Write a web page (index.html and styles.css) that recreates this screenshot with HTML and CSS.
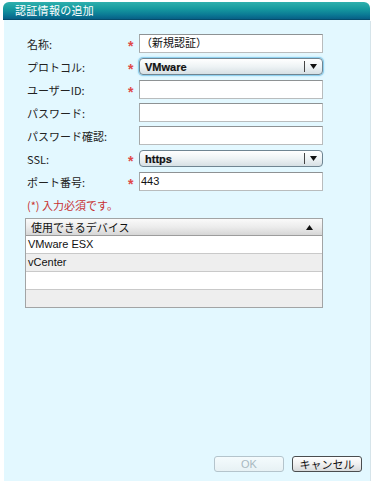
FILE: index.html
```html
<!DOCTYPE html>
<html lang="ja">
<head>
<meta charset="utf-8">
<title>認証情報の追加</title>
<link rel="stylesheet" href="styles.css">
</head>
<body>
<div class="window">
  <div class="titlebar">認証情報の追加</div>
  <div class="panel">
    <div class="form">
      <div class="label">名称:</div><div class="req">*</div><div class="input">（新規認証）</div>
      <div class="label">プロトコル:</div><div class="req">*</div>
      <div class="select focus"><span class="sel-text">VMware</span><span class="sep"></span><svg class="arrow" width="7" height="5" viewBox="0 0 7 5"><path d="M0 0H7L3.5 5Z" fill="#111"/></svg></div>
      <div class="label">ユーザーID:</div><div class="req">*</div><div class="input"></div>
      <div class="label">パスワード:</div><div class="req"></div><div class="input"></div>
      <div class="label">パスワード確認:</div><div class="req"></div><div class="input"></div>
      <div class="label">SSL:</div><div class="req">*</div>
      <div class="select"><span class="sel-text">https</span><span class="sep"></span><svg class="arrow" width="7" height="5" viewBox="0 0 7 5"><path d="M0 0H7L3.5 5Z" fill="#111"/></svg></div>
      <div class="label">ポート番号:</div><div class="req">*</div><div class="input">443</div>
    </div>
    <div class="note">(*) 入力必須です。</div>
    <div class="table">
      <div class="thead"><span>使用できるデバイス</span><svg width="7" height="5" viewBox="0 0 7 5"><path d="M0 5H7L3.5 0Z" fill="#111"/></svg></div>
      <div class="row">VMware ESX</div>
      <div class="row alt">vCenter</div>
      <div class="row"></div>
      <div class="row alt"></div>
    </div>
    <div class="spacer"></div>
    <div class="buttons">
      <div class="btn disabled">OK</div>
      <div class="btn">キャンセル</div>
    </div>
  </div>
</div>
</body>
</html>
```
FILE: styles.css
```css
html, body {
  margin: 0;
  padding: 0;
  background: #ffffff;
}
body {
  font-family: "Liberation Sans", "Noto Sans CJK JP", sans-serif;
  font-size: 11px;
  color: #111;
}
.window {
  margin: 2px 0 0 3px;
  width: 367px;
  display: flex;
  flex-direction: column;
}
.titlebar {
  height: 18px;
  border-radius: 6px 6px 0 0;
  background: linear-gradient(#2fb0ad 0%, #169a9f 40%, #0b7a95 75%, #075f86 100%);
  border-bottom: 1px solid #064c6c;
  color: #fff;
  font-family: "Noto Sans CJK JP", sans-serif;
  font-size: 11px;
  line-height: 17px;
  padding-left: 12px;
  box-sizing: border-box;
  letter-spacing: 0.3px;
}
.panel {
  margin-left: 1px;
  height: 461px;
  background: #e3f8ff;
  display: flex;
  flex-direction: column;
  padding: 14px 0 9px 21px;
  box-sizing: border-box;
  box-shadow: 1px 1px 0 #d6e4ea;
}
.form {
  display: grid;
  grid-template-columns: 105px 9px 184px;
  grid-auto-rows: 19px;
  row-gap: 4px;
  align-items: center;
}
.label {
  padding-left: 2px;
  font-family: "Noto Sans CJK JP", sans-serif;
  font-size: 11px;
  color: #222;
}
.req {
  color: #e04848;
  font-size: 14px;
  font-weight: bold;
  line-height: 19px;
  padding-top: 3px;
  margin-left: -2px;
  height: 19px;
  box-sizing: border-box;
}
.input {
  height: 19px;
  box-sizing: border-box;
  background: #fff;
  border: 1px solid #b9bcbd;
  border-top-color: #8e9294;
  border-left-color: #a6a9aa;
  padding-left: 1px;
  line-height: 17px;
  font-family: "Liberation Sans", "Noto Sans CJK JP", sans-serif;
  font-size: 11px;
}
.select {
  height: 17px;
  box-sizing: border-box;
  border: 1px solid #6f8592;
  border-radius: 4px;
  background: linear-gradient(#ffffff 0%, #eef3f5 50%, #d6e0e4 100%);
  display: flex;
  align-items: center;
  padding-left: 5px;
  font-size: 11px;
}
.select.focus {
  box-shadow: 0 0 0 1px #8fd0ef, 0 0 2px 1px #a9dcf3;
}
.sel-text {
  flex: 1;
  font-weight: 600;
  -webkit-text-stroke: 0.2px #111;
}
.sep {
  width: 1px;
  height: 11px;
  background: #444;
  margin-right: 5px;
}
.arrow {
  margin-right: 5px;
}
.note {
  margin-top: 8px;
  padding-left: 2px;
  color: #c83232;
  font-family: "Noto Sans CJK JP", sans-serif;
  font-size: 11px;
  line-height: 12px;
}
.table {
  margin-top: 7px;
  width: 298px;
  box-sizing: border-box;
  border: 1px solid #a2a4a5;
  display: flex;
  flex-direction: column;
}
.thead {
  height: 16px;
  background: linear-gradient(#fafafa 0%, #ececec 50%, #d6d6d6 100%);
  border-bottom: 1px solid #9c9c9c;
  display: flex;
  align-items: center;
  justify-content: space-between;
  padding: 0 9px 0 5px;
  font-family: "Noto Sans CJK JP", sans-serif;
  font-size: 11px;
}
.row {
  height: 18px;
  box-sizing: border-box;
  border-bottom: 1px solid #c9c9c9;
  background: #fff;
  padding-left: 2px;
  line-height: 17px;
  font-size: 11px;
}
.row:last-child {
  border-bottom: none;
  height: 17px;
}
.row.alt {
  background: #eeeeee;
}
.spacer {
  flex: 1;
}
.buttons {
  display: flex;
  justify-content: flex-end;
  gap: 8px;
  padding-right: 8px;
}
.btn {
  width: 70px;
  height: 16px;
  box-sizing: border-box;
  border: 1px solid #4a4d4f;
  border-radius: 3px;
  background: linear-gradient(#ffffff 0%, #f0f0f0 50%, #d8dadb 100%);
  text-align: center;
  line-height: 14px;
  font-family: "Noto Sans CJK JP", sans-serif;
  font-size: 11px;
  color: #111;
}
.btn.disabled {
  border-color: #b4c4cc;
  color: #a9b9c1;
  background: linear-gradient(#f4fbfd 0%, #e7f1f4 100%);
  font-family: "Liberation Sans", sans-serif;
}
```
